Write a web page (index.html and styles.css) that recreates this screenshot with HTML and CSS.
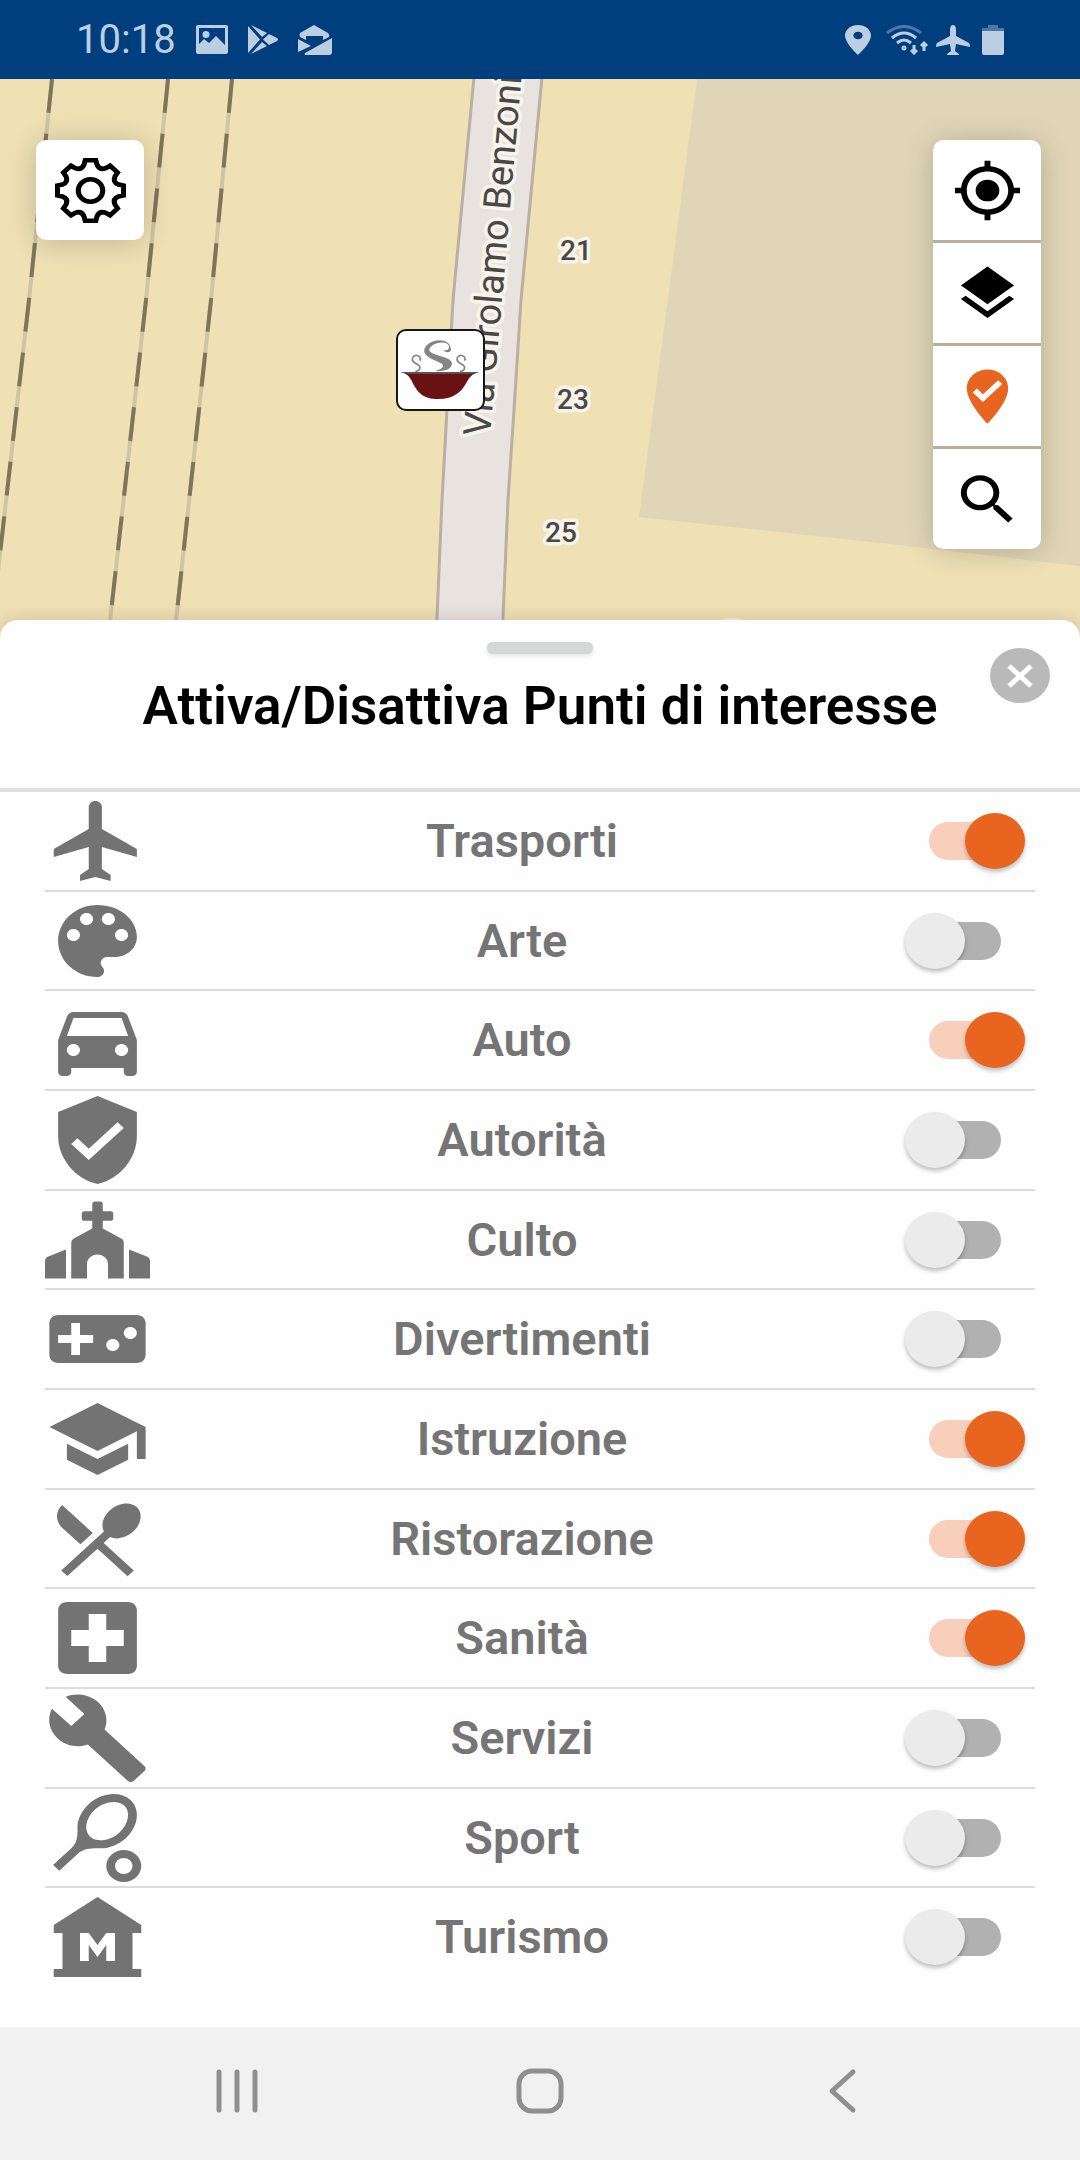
FILE: index.html
```html
<!DOCTYPE html>
<html lang="it">

<head>
    <meta charset="UTF-8">
    <meta name="viewport" content="width=device-width, initial-scale=1.0">
    <title>Punti di interesse</title>
    <link rel="stylesheet" href="styles.css">
</head>

<body>

    <header class="status-bar">
        <div class="status-left">
            <span class="clock">10:18</span>
            <svg width="32" height="29" viewBox="0 0 32 29">
                <path fill-rule="evenodd" d="M2 0h28a2 2 0 0 1 2 2v25a2 2 0 0 1-2 2H2a2 2 0 0 1-2-2V2a2 2 0 0 1 2-2zM3 3v16l5-5 5 4 7-7 9 9V3zM10 6a3.500 3.500 0 1 1 0 7a3.500 3.500 0 0 1 0-7z" />
            </svg>
            <svg width="30" height="29" viewBox="0 0 30 29">
                <path d="M0 1v27L12 14.500zM3 0l11 12 5-4zM3 29l11-12 5 4zM21 9l-6 5.500 6 5.500 8-4q2-1.500 0-3z" />
            </svg>
            <svg width="34" height="30" viewBox="0 0 34 30">
                <path d="M16 0L2 8q-1 2 0 4l6 3v-4h17v4l6-3q1-2-1-4zM0 14v13l13-6zM34 13v14a3 3 0 0 1-3 3H7q-1-1 0-2z" />
            </svg>
        </div>
        <div class="status-right">
            <svg width="26" height="30" viewBox="5 2 14 20" preserveAspectRatio="none">
                <path d="M12 2C8.130 2 5 5.130 5 9c0 5.250 7 13 7 13s7-7.750 7-13c0-3.870-3.130-7-7-7zm0 9.500a2.500 2.500 0 0 1 0-5 2.500 2.500 0 0 1 0 5z" />
            </svg>
            <svg class="wifi" width="44" height="30" viewBox="0 0 44 30">
                <path class="wifi-weak" d="M1 8Q18-5 35 8" />
                <path d="M6 13Q18 3 30 13M11 18Q18 12 25 18" />
                <circle cx="18" cy="23" r="1" />
                <path d="M28 20v8M25 25l3 3 3-3M38 26v-8M35 21l3-3 3 3" />
            </svg>
            <svg width="34" height="30" viewBox="0 0 34 30">
                <path d="M17 0q3 0 3 5v6l13 7q1 1 1 4l-14-3-1 7 4 3v1H11v-1l4-3-1-7-14 3q0-3 1-4l13-7V5q0-5 3-5z" />
            </svg>
            <svg class="battery" width="22" height="30" viewBox="0 0 22 30">
                <path opacity=".4" d="M6 0h10v3h6v3H0V3h6z" />
                <path d="M0 6h22v22a2 2 0 0 1-2 2H2a2 2 0 0 1-2-2z" />
            </svg>
        </div>
    </header>

    <main class="map">
        <svg class="map-canvas" viewBox="0 0 1080 560" preserveAspectRatio="xMidYMin slice">
            <path class="building" d="M697 0L639 438L880 464L1080 487V0z" />
            <path class="street" d="M474 -2L453 221L442 421L436 562H502L508 421L514 331L521 221L542 -2z" />
            <g class="rail-bed">
                <path d="M52 0L29 221L-3 501" />
                <path d="M168 0L146 221L108 560" />
                <path d="M232 0L211 221L174 560" />
            </g>
            <g class="rail">
                <path d="M52 0L29 221L-3 501" />
                <path d="M168 0L146 221L108 560" />
                <path d="M232 0L211 221L174 560" />
            </g>
            <text class="street-name" transform="translate(490 358) rotate(-85)">Via Girolamo Benzoni</text>
            <text class="house-number" x="576" y="181">21</text>
            <text class="house-number" x="573" y="330">23</text>
            <text class="house-number" x="561" y="463">25</text>
            <ellipse cx="732" cy="544" rx="14" ry="5" fill="#f6f0de" />
            <!-- ristorante -->
            <rect class="poi" x="397" y="251" width="87" height="80" rx="9" />
            <g transform="translate(380 221) scale(.3333)">
                <path fill="#6a1213" d="M62 217H297Q275 221 264 240C245 277 222 297 175 297C128 297 112 277 95 242Q85 221 62 217z" />
                <path fill="#555" d="M62 216H297L275 222H85z" />
                <path fill="#858585" d="M213 150C213 116 165 112 140 136C118 162 150 175 175 186C195 194 196 204 166 213C192 216 216 208 216 190C216 168 150 168 148 150C150 128 203 118 207 140C207 150 199 152 188 151C198 159 212 158 213 150z" />
                <g class="steam">
                    <path d="M120 182C127 164 98 160 97 178C96 192 120 190 120 203C119 211 112 214 106 214" />
                    <path d="M254 182C261 164 232 160 231 178C230 192 254 190 254 203C253 211 246 214 240 214" />
                </g>
            </g>
        </svg>

        <button class="map-button settings" aria-label="Impostazioni">
            <svg class="map-icon gear" viewBox="-24 -24 48 48" preserveAspectRatio="none">
                <path d="M-3.600-22.300L3.600-22.300L4.400-19C5.600-16.200 7.500-15.400 10.300-16.500L13.200-18.300L18.300-13.200L16.500-10.300C15.400-7.500 16.200-5.600 19-4.400L22.300-3.600L22.300 3.600L19 4.400C16.200 5.600 15.400 7.500 16.500 10.300L18.300 13.200L13.200 18.300L10.300 16.500C7.500 15.400 5.600 16.200 4.400 19L3.600 22.300L-3.600 22.300L-4.400 19C-5.600 16.200-7.500 15.400-10.300 16.500L-13.200 18.300L-18.300 13.200L-16.500 10.300C-15.400 7.500-16.200 5.600-19 4.400L-22.300 3.600L-22.300-3.600L-19-4.400C-16.200-5.600-15.400-7.500-16.500-10.300L-18.300-13.200L-13.200-18.300L-10.300-16.500C-7.500-15.400-5.600-16.200-4.400-19z" />
                <circle r="8.300" />
            </svg>
        </button>

        <div class="map-tools">
            <button class="map-button" aria-label="Posizione">
                <svg class="map-icon" viewBox="0 0 24 24" preserveAspectRatio="none">
                    <circle cx="12" cy="12" r="4" />
                    <path d="M20.940 11c-.46-4.170-3.770-7.480-7.940-7.940V1h-2v2.060C6.830 3.520 3.520 6.830 3.060 11H1v2h2.060c.46 4.170 3.770 7.480 7.940 7.940V23h2v-2.060c4.170-.46 7.480-3.770 7.940-7.940H23v-2h-2.060zM12 19c-3.870 0-7-3.130-7-7s3.130-7 7-7 7 3.130 7 7-3.130 7-7 7z" />
                </svg>
            </button>
            <button class="map-button" aria-label="Livelli">
                <svg class="map-icon" viewBox="0 0 24 24" preserveAspectRatio="none">
                    <path d="M11.990 18.540l-7.370-5.730L3 14.070l9 7 9-7-1.630-1.270-7.380 5.740zM12 16l7.360-5.730L21 9l-9-7-9 7 1.630 1.270L12 16z" />
                </svg>
            </button>
            <button class="map-button active" aria-label="Punti di interesse">
                <svg class="map-icon" viewBox="0 0 24 24" preserveAspectRatio="none">
                    <path d="M12 2c3.860 0 7 3.140 7 7 0 5.250-7 13-7 13S5 14.250 5 9c0-3.860 3.140-7 7-7zm-1.530 12L17 7.410 15.600 6l-5.130 5.180L8.400 9.090 7 10.500l3.470 3.500z" />
                </svg>
            </button>
            <button class="map-button" aria-label="Cerca">
                <svg class="map-icon" viewBox="0 0 24 24" preserveAspectRatio="none">
                    <path d="M15.500 14h-.79l-.28-.27C15.410 12.590 16 11.110 16 9.500 16 5.910 13.090 3 9.500 3S3 5.910 3 9.500 5.910 16 9.500 16c1.610 0 3.090-.59 4.230-1.570l.27.28v.79l5 4.990L20.490 19l-4.990-5zm-6 0C7.010 14 5 11.990 5 9.500S7.010 5 9.500 5 14 7.010 14 9.500 11.990 14 9.500 14z" />
                </svg>
            </button>
        </div>
    </main>

    <section class="sheet">
        <div class="sheet-header">
            <span class="handle"></span>
            <h1 class="title">Attiva/Disattiva Punti di interesse</h1>
            <button class="close" aria-label="Chiudi">
                <svg width="28" height="26" viewBox="0 0 28 26">
                    <path d="M3 3l22 20M25 3L3 23" />
                </svg>
            </button>
        </div>

        <ul class="poi-list">
            <li class="poi-row">
                <svg class="poi-icon" viewBox="0 0 24 24" preserveAspectRatio="none"><path d="M21 16v-2l-8-5V3.500c0-.83-.67-1.500-1.500-1.500S10 2.670 10 3.500V9l-8 5v2l8-2.500V19l-2 1.500V22l3.500-1 3.500 1v-1.500L13 19v-5.500l8 2.500z" /></svg>
                <label class="poi-label" for="trasporti">Trasporti</label>
                <input class="toggle" type="checkbox" id="trasporti" checked>
            </li>
            <li class="poi-row">
                <svg class="poi-icon" viewBox="0 0 24 24" preserveAspectRatio="none"><path d="M12 3c-4.970 0-9 4.030-9 9s4.030 9 9 9c.83 0 1.500-.67 1.500-1.500 0-.39-.15-.74-.39-1.010-.23-.26-.38-.61-.38-.99 0-.83.67-1.500 1.500-1.500H16c2.760 0 5-2.240 5-5 0-4.420-4.030-8-9-8zm-5.500 9c-.83 0-1.500-.67-1.500-1.500S5.670 9 6.500 9 8 9.670 8 10.500 7.330 12 6.500 12zm3-4C8.670 8 8 7.330 8 6.500S8.670 5 9.500 5s1.500.67 1.500 1.500S10.330 8 9.500 8zm5 0c-.83 0-1.500-.67-1.500-1.500S13.670 5 14.500 5s1.500.67 1.500 1.500S15.330 8 14.500 8zm3 4c-.83 0-1.500-.67-1.500-1.500S16.670 9 17.500 9s1.500.67 1.500 1.500-.67 1.500-1.500 1.500z" /></svg>
                <label class="poi-label" for="arte">Arte</label>
                <input class="toggle" type="checkbox" id="arte">
            </li>
            <li class="poi-row">
                <svg class="poi-icon" viewBox="0 0 24 24" preserveAspectRatio="none"><path d="M18.920 6.010C18.720 5.420 18.160 5 17.500 5h-11c-.66 0-1.210.42-1.420 1.010L3 12v8c0 .55.45 1 1 1h1c.55 0 1-.45 1-1v-1h12v1c0 .55.45 1 1 1h1c.55 0 1-.45 1-1v-8l-2.080-5.990zM6.500 16c-.83 0-1.500-.67-1.500-1.500S5.670 13 6.500 13s1.500.67 1.500 1.500S7.330 16 6.500 16zm11 0c-.83 0-1.500-.67-1.500-1.500s.67-1.500 1.500-1.500 1.500.67 1.500 1.500-.67 1.500-1.500 1.500zM5 11l1.500-4.500h11L19 11H5z" /></svg>
                <label class="poi-label" for="auto">Auto</label>
                <input class="toggle" type="checkbox" id="auto" checked>
            </li>
            <li class="poi-row">
                <svg class="poi-icon" viewBox="0 0 24 24" preserveAspectRatio="none"><path d="M12 1L3 5v6c0 5.550 3.840 10.740 9 12 5.160-1.260 9-6.450 9-12V5l-9-4zm-2 16l-4-4 1.410-1.410L10 14.170l6.590-6.590L18 9l-8 8z" /></svg>
                <label class="poi-label" for="autorita">Autorità</label>
                <input class="toggle" type="checkbox" id="autorita">
            </li>
            <li class="poi-row">
                <svg class="poi-icon" viewBox="0 -64 640 640" preserveAspectRatio="none"><path d="M464.460 246.680L352 179.200V128h48c8.840 0 16-7.160 16-16V80c0-8.840-7.160-16-16-16h-48V16c0-8.840-7.160-16-16-16h-32c-8.840 0-16 7.160-16 16v48h-48c-8.840 0-16 7.160-16 16v32c0 8.840 7.160 16 16 16h48v51.200l-112.460 67.480A32 32 0 0 0 160 274.120V512h96v-96c0-35.350 28.650-64 64-64s64 28.650 64 64v96h96V274.120c0-11.240-5.900-21.660-15.540-27.440zM0 395.960V512h128V320L19.390 366.540A32 32 0 0 0 0 395.960zm620.610-29.420L512 320v192h128V395.960c0-12.800-7.630-24.370-19.390-29.420z" /></svg>
                <label class="poi-label" for="culto">Culto</label>
                <input class="toggle" type="checkbox" id="culto">
            </li>
            <li class="poi-row">
                <svg class="poi-icon" viewBox="0 0 24 24" preserveAspectRatio="none"><path d="M21 6H3c-1.100 0-2 .9-2 2v8c0 1.100.9 2 2 2h18c1.100 0 2-.9 2-2V8c0-1.100-.9-2-2-2zm-10 7H8v3H6v-3H3v-2h3V8h2v3h3v2zm4.500 2c-.83 0-1.500-.67-1.500-1.500s.67-1.500 1.500-1.500 1.500.67 1.500 1.500-.67 1.500-1.500 1.500zm4-3c-.83 0-1.500-.67-1.500-1.500S18.670 9 19.500 9s1.500.67 1.500 1.500-.67 1.500-1.500 1.500z" /></svg>
                <label class="poi-label" for="divertimenti">Divertimenti</label>
                <input class="toggle" type="checkbox" id="divertimenti">
            </li>
            <li class="poi-row">
                <svg class="poi-icon" viewBox="0 0 24 24" preserveAspectRatio="none"><path d="M5 13.180v4L12 21l7-3.820v-4L12 17l-7-3.820zM12 3L1 9l11 6 9-4.910V17h2V9L12 3z" /></svg>
                <label class="poi-label" for="istruzione">Istruzione</label>
                <input class="toggle" type="checkbox" id="istruzione" checked>
            </li>
            <li class="poi-row">
                <svg class="poi-icon" viewBox="0 0 24 24" preserveAspectRatio="none"><path d="M8.100 13.340l2.830-2.830L3.910 3.500c-1.560 1.560-1.560 4.090 0 5.660l4.190 4.180zm6.780-1.810c1.530.71 3.680.21 5.270-1.380 1.910-1.910 2.280-4.650.81-6.120-1.460-1.460-4.200-1.100-6.120.81-1.590 1.590-2.090 3.740-1.380 5.270L3.700 19.870l1.410 1.410L12 14.410l6.880 6.880 1.410-1.410L13.410 13l1.470-1.470z" /></svg>
                <label class="poi-label" for="ristorazione">Ristorazione</label>
                <input class="toggle" type="checkbox" id="ristorazione" checked>
            </li>
            <li class="poi-row">
                <svg class="poi-icon" viewBox="0 0 24 24" preserveAspectRatio="none"><path d="M19 3H5c-1.100 0-1.990.9-1.990 2L3 19c0 1.100.9 2 2 2h14c1.100 0 2-.9 2-2V5c0-1.100-.9-2-2-2zm-1 11h-4v4h-4v-4H6v-4h4V6h4v4h4v4z" /></svg>
                <label class="poi-label" for="sanita">Sanità</label>
                <input class="toggle" type="checkbox" id="sanita" checked>
            </li>
            <li class="poi-row">
                <svg class="poi-icon" viewBox="0 0 24 24" preserveAspectRatio="none"><path d="M22.700 19l-9.100-9.100c.9-2.300.4-5-1.500-6.900-2-2-5-2.400-7.400-1.300L9 6 6 9 1.600 4.700C.4 7.100.9 10.100 2.900 12.100c1.900 1.900 4.600 2.400 6.900 1.500l9.100 9.100c.4.4 1 .4 1.400 0l2.300-2.300c.5-.4.5-1.100.1-1.400z" /></svg>
                <label class="poi-label" for="servizi">Servizi</label>
                <input class="toggle" type="checkbox" id="servizi">
            </li>
            <li class="poi-row">
                <svg class="poi-icon" viewBox="0 0 24 24" preserveAspectRatio="none"><path d="M19.520 2.490c-2.340-2.340-6.620-1.870-9.550 1.060-1.600 1.600-2.520 3.870-2.540 5.460-.02 1.580.26 3.890-1.350 5.500l-4.240 4.240 1.420 1.420 4.240-4.240c1.610-1.610 3.920-1.330 5.500-1.350s3.860-.94 5.460-2.540c2.920-2.930 3.400-7.210 1.060-9.550zm-9.200 9.190c-1.530-1.530-1.050-4.610 1.060-6.720s5.180-2.590 6.720-1.060c1.530 1.530 1.050 4.610-1.060 6.720s-5.180 2.590-6.720 1.060zM18 17a2 2 0 1 1 0 4 2 2 0 0 1 0-4m0-2a4 4 0 1 0 0 8 4 4 0 0 0 0-8z" /></svg>
                <label class="poi-label" for="sport">Sport</label>
                <input class="toggle" type="checkbox" id="sport">
            </li>
            <li class="poi-row">
                <svg class="poi-icon" viewBox="0 0 24 24" preserveAspectRatio="none"><path d="M22 11V9L12 2 2 9v2h2v9H2v2h20v-2h-2v-9h2zm-6 7h-2v-4l-2 3-2-3v4H8v-7h2l2 3 2-3h2v7z" /></svg>
                <label class="poi-label" for="turismo">Turismo</label>
                <input class="toggle" type="checkbox" id="turismo">
            </li>
        </ul>
    </section>

    <nav class="nav-bar">
        <button class="nav-button" aria-label="Recenti">
            <svg width="48" height="46" viewBox="0 0 48 46"><path d="M5 4v38M23 4v38M41 4v38" /></svg>
        </button>
        <button class="nav-button" aria-label="Home">
            <svg width="48" height="46" viewBox="0 0 48 46"><rect x="3" y="3" width="42" height="40" rx="13" /></svg>
        </button>
        <button class="nav-button" aria-label="Indietro">
            <svg width="48" height="46" viewBox="0 0 48 46"><path d="M35 4L14 23l21 19" /></svg>
        </button>
    </nav>

</body>

</html>
```

FILE: styles.css
```css
* {
    box-sizing: border-box;
}

body {
    margin: 0;
    min-height: 100vh;
    display: flex;
    flex-direction: column;
    background-color: #fefefe;
    font-family: Roboto, sans-serif;
}

button {
    display: flex;
    align-items: center;
    justify-content: center;
    padding: 0;
    border: none;
    cursor: pointer;
}

.status-bar {
    display: flex;
    justify-content: space-between;
    align-items: center;
    height: 79px;
    padding: 0 76px;
    background-color: #003e7e;
    color: #bccfe2;
    fill: #bccfe2;
}

.status-left {
    display: flex;
    align-items: center;
    gap: 20px;
}

.status-right {
    display: flex;
    align-items: center;
    gap: 6px;
}

.clock {
    font-size: 40px;
    line-height: 44px;
}

.wifi {
    fill: none;
    stroke: #bccfe2;
    stroke-width: 3;
    margin-left: 9px;
}

.wifi-weak {
    opacity: 0.4;
}

.battery {
    margin-left: 6px;
}

.map {
    position: relative;
    height: 560px;
    background-color: #efe1b4;
    overflow: hidden;
}

.map-canvas {
    display: block;
    width: 100%;
    height: 100%;
}

.building {
    fill: #e0d6b7;
}

.street {
    fill: #e8e3df;
    stroke: #b9afa3;
    stroke-width: 3;
}

.rail-bed {
    fill: none;
    stroke: #cfc4a3;
    stroke-width: 4;
}

.rail {
    fill: none;
    stroke: #80755b;
    stroke-width: 4;
    stroke-dasharray: 34 21;
}

.street-name,
.house-number {
    fill: #484848;
    stroke: #f8f4ea;
    stroke-width: 7;
    stroke-linejoin: round;
    paint-order: stroke;
}

.street-name {
    font-size: 38px;
}

.house-number {
    font-size: 28px;
    font-weight: 500;
    text-anchor: middle;
}

.poi {
    fill: #fff;
    stroke: #161616;
    stroke-width: 2;
}

.steam {
    fill: none;
    stroke: #858585;
    stroke-width: 5;
}

.map-button {
    width: 108px;
    height: 100px;
    background-color: #fff;
    fill: #000;
}

.map-button.active {
    fill: #e8641f;
}

.map-icon {
    width: 71px;
    height: 65px;
}

.gear {
    fill: none;
    stroke: #000;
    stroke-width: 3.4;
}

.settings {
    position: absolute;
    top: 61px;
    left: 36px;
    border-radius: 10px;
    box-shadow: 0 2px 30px rgba(0, 0, 0, 0.2);
}

.map-tools {
    position: absolute;
    top: 61px;
    right: 39px;
    display: flex;
    flex-direction: column;
    gap: 3px;
    border-radius: 10px;
    overflow: hidden;
    background-color: #bbb095;
    box-shadow: 0 2px 30px rgba(0, 0, 0, 0.2);
}

.sheet {
    position: relative;
    flex: 1;
    display: flex;
    flex-direction: column;
    margin-top: -19px;
    border-radius: 18px 18px 0 0;
    background-color: #fefefe;
    box-shadow: 0 -4px 16px rgba(0, 0, 0, 0.1);
}

.sheet-header {
    display: flex;
    flex-direction: column;
    align-items: center;
    height: 172px;
    padding-top: 22px;
    border-bottom: 4px solid #e0e0e0;
}

.handle {
    width: 106px;
    height: 12px;
    border-radius: 5px;
    background-color: #d5d8d7;
    box-shadow: 0 2px 4px rgba(0, 0, 0, 0.1);
}

.title {
    margin: 22px 0 0;
    font-size: 53px;
    line-height: 60px;
    font-weight: 600;
    color: #000;
}

.close {
    position: absolute;
    top: 28px;
    right: 30px;
    width: 60px;
    height: 55px;
    border-radius: 50%;
    background-color: #b9b9b9;
    fill: none;
    stroke: #fff;
    stroke-width: 5;
}

.poi-list {
    flex: 1;
    display: flex;
    flex-direction: column;
    margin: 0;
    padding: 0 45px 39px;
    list-style: none;
}

.poi-row {
    flex: 1;
    display: flex;
    align-items: center;
    border-bottom: 2px solid #dcdcdc;
}

.poi-row:last-child {
    border-bottom-color: transparent;
}

.poi-icon {
    width: 105px;
    height: 96px;
    fill: #737373;
}

.poi-label {
    flex: 1;
    text-align: center;
    font-size: 47px;
    line-height: 54px;
    font-weight: 600;
    color: #757575;
}

.toggle {
    appearance: none;
    position: relative;
    width: 72px;
    height: 38px;
    margin: 0 34px 0 35px;
    border-radius: 19px;
    background-color: #b1b1b1;
    cursor: pointer;
}

.toggle::before {
    content: "";
    position: absolute;
    top: -9px;
    left: -24px;
    width: 60px;
    height: 56px;
    border-radius: 50%;
    background-color: #ebebeb;
    box-shadow: 0 3px 4px rgba(0, 0, 0, 0.25);
}

.toggle:checked {
    background-color: #f8cfbb;
}

.toggle:checked::before {
    left: 36px;
    background-color: #e8641f;
}

.nav-bar {
    position: relative;
    display: flex;
    justify-content: center;
    gap: 202px;
    height: 133px;
    padding-bottom: 6px;
    background-color: #f1f1f1;
}

.nav-button {
    width: 100px;
    background: none;
    fill: none;
    stroke: #8f8f8f;
    stroke-width: 5;
    stroke-linecap: round;
    stroke-linejoin: round;
}
```
